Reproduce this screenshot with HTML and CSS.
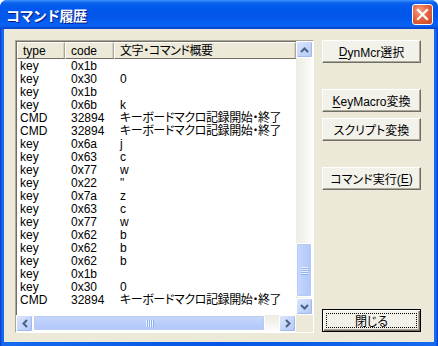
FILE: index.html
```html
<!DOCTYPE html>
<html lang="ja">
<head>
    <meta charset="UTF-8">
    <title>コマンド履歴</title>
    <link rel="stylesheet" href="styles.css">
</head>
<body>
    <div class="window">
        <div class="titlebar">
            <span class="title">コマンド履歴</span>
            <span class="close-btn">
                <svg width="13" height="13" viewBox="0 0 13 13">
                    <path d="M2 2 L11 11 M11 2 L2 11" stroke="#fff" stroke-width="2.2" stroke-linecap="square"/>
                </svg>
            </span>
        </div>
        <div class="client">
            <div class="list">
                <div class="view">
                    <div class="header">
                        <div class="col col-type">type</div>
                        <div class="col col-code">code</div>
                        <div class="col col-desc">文字・コマンド概要</div>
                    </div>
                    <div class="rows">
                        <div class="row"><span class="c-type">key</span><span class="c-code">0x1b</span><span class="c-desc"></span></div>
                        <div class="row"><span class="c-type">key</span><span class="c-code">0x30</span><span class="c-desc">0</span></div>
                        <div class="row"><span class="c-type">key</span><span class="c-code">0x1b</span><span class="c-desc"></span></div>
                        <div class="row"><span class="c-type">key</span><span class="c-code">0x6b</span><span class="c-desc">k</span></div>
                        <div class="row"><span class="c-type">CMD</span><span class="c-code">32894</span><span class="c-desc">キーボードマクロ記録開始・終了</span></div>
                        <div class="row"><span class="c-type">CMD</span><span class="c-code">32894</span><span class="c-desc">キーボードマクロ記録開始・終了</span></div>
                        <div class="row"><span class="c-type">key</span><span class="c-code">0x6a</span><span class="c-desc">j</span></div>
                        <div class="row"><span class="c-type">key</span><span class="c-code">0x63</span><span class="c-desc">c</span></div>
                        <div class="row"><span class="c-type">key</span><span class="c-code">0x77</span><span class="c-desc">w</span></div>
                        <div class="row"><span class="c-type">key</span><span class="c-code">0x22</span><span class="c-desc">"</span></div>
                        <div class="row"><span class="c-type">key</span><span class="c-code">0x7a</span><span class="c-desc">z</span></div>
                        <div class="row"><span class="c-type">key</span><span class="c-code">0x63</span><span class="c-desc">c</span></div>
                        <div class="row"><span class="c-type">key</span><span class="c-code">0x77</span><span class="c-desc">w</span></div>
                        <div class="row"><span class="c-type">key</span><span class="c-code">0x62</span><span class="c-desc">b</span></div>
                        <div class="row"><span class="c-type">key</span><span class="c-code">0x62</span><span class="c-desc">b</span></div>
                        <div class="row"><span class="c-type">key</span><span class="c-code">0x62</span><span class="c-desc">b</span></div>
                        <div class="row"><span class="c-type">key</span><span class="c-code">0x1b</span><span class="c-desc"></span></div>
                        <div class="row"><span class="c-type">key</span><span class="c-code">0x30</span><span class="c-desc">0</span></div>
                        <div class="row"><span class="c-type">CMD</span><span class="c-code">32894</span><span class="c-desc">キーボードマクロ記録開始・終了</span></div>
                    </div>
                </div>
                <div class="vscroll">
                    <div class="sb-btn">
                        <svg width="9" height="6" viewBox="0 0 9 6"><path d="M1 5 L4.5 1.5 L8 5" fill="none" stroke="#4D6185" stroke-width="2"/></svg>
                    </div>
                    <div class="v-track">
                        <div class="v-thumb">
                            <div class="grip-v"><i></i><i></i><i></i><i></i></div>
                        </div>
                    </div>
                    <div class="sb-btn">
                        <svg width="9" height="6" viewBox="0 0 9 6"><path d="M1 1 L4.5 4.5 L8 1" fill="none" stroke="#4D6185" stroke-width="2"/></svg>
                    </div>
                </div>
                <div class="hscroll">
                    <div class="sb-btn">
                        <svg width="6" height="9" viewBox="0 0 6 9"><path d="M5 1 L1.5 4.5 L5 8" fill="none" stroke="#4D6185" stroke-width="2"/></svg>
                    </div>
                    <div class="h-track">
                        <div class="h-thumb">
                            <div class="grip-h"><i></i><i></i><i></i><i></i></div>
                        </div>
                    </div>
                    <div class="sb-btn">
                        <svg width="6" height="9" viewBox="0 0 6 9"><path d="M1 1 L4.5 4.5 L1 8" fill="none" stroke="#4D6185" stroke-width="2"/></svg>
                    </div>
                </div>
                <div class="corner"></div>
            </div>

            <div class="buttons">
                <div class="btn btn-first"><u>D</u>ynMcr選択</div>
                <div class="btn btn-gap"><u>K</u>eyMacro変換</div>
                <div class="btn btn-near">スクリプト変換</div>
                <div class="btn btn-gap">コマンド実行(<u>E</u>)</div>
                <div class="btn btn-default"><span class="focus">閉じる</span></div>
            </div>
        </div>
    </div>
</body>
</html>
```

FILE: styles.css
```css
* {
    margin: 0;
    padding: 0;
    box-sizing: border-box;
}

body {
    background: #ffffff;
    font-family: 'Liberation Sans', 'Noto Sans CJK JP', sans-serif;
    font-size: 12px;
    color: #000;
}

.window {
    width: 438px;
    height: 346px;
    display: flex;
    flex-direction: column;
    background: linear-gradient(to right, #0831D9 0, #166AEE 2px, #0855E5 50%, #166AEE calc(100% - 2px), #0831D9 100%);
    border-radius: 7px 7px 0 0;
    overflow: hidden;
}

.titlebar {
    height: 29px;
    display: flex;
    align-items: center;
    justify-content: space-between;
    padding: 0 5px 0 6px;
    background: linear-gradient(to bottom, #3D95FF 0, #0A5FEC 3px, #0058EE 8px, #0357E9 18px, #0662F5 24px, #0C5FEE 26px, #0447D4 28px);
}

.title {
    color: #fff;
    font-family: 'Noto Sans CJK JP', sans-serif;
    font-weight: bold;
    font-size: 14px;
    text-shadow: 1px 1px 0 #0A1883;
    letter-spacing: -0.6px;
}

.close-btn {
    width: 21px;
    height: 21px;
    display: flex;
    align-items: center;
    justify-content: center;
    border: 1px solid #fff;
    border-radius: 3px;
    background: radial-gradient(circle at 35% 30%, #F4A283 0, #E66A44 40%, #CC4320 100%);
}

.client {
    flex: 1;
    margin: 0 4px 4px;
    background: #ECE9D8;
    display: flex;
    padding: 11px 0 0 11px;
}

/* list view */
.list {
    width: 299px;
    height: 293px;
    display: grid;
    grid-template-columns: 1fr 17px;
    grid-template-rows: 1fr 17px;
    border: 1px solid;
    border-color: #ACA899 #fff #fff #ACA899;
    background: #fff;
    box-shadow: inset 1px 1px 0 #716F64;
}

.view {
    overflow: hidden;
    padding: 1px 0 0 1px;
}

.header {
    display: flex;
    height: 17px;
    background: #ECE9D8;
    white-space: nowrap;
}

.col {
    height: 17px;
    line-height: 16px;
    padding-left: 5px;
    border-top: 1px solid #fff;
    border-left: 1px solid #fff;
    border-right: 1px solid #ACA899;
    border-bottom: 1px solid #716F64;
    box-shadow: inset -1px 0 0 #D6D2C2;
}

.col-type { width: 48px; }
.col-code { width: 49px; }
.col-desc { flex: 1; font-feature-settings: "palt"; letter-spacing: -0.4px; }

.rows {
    padding-top: 1px;
}

.row {
    display: flex;
    height: 13px;
    line-height: 13px;
    white-space: nowrap;
}

.c-type { width: 48px; padding-left: 3px; }
.c-code { width: 49px; padding-left: 6px; }
.c-desc { padding-left: 6px; font-feature-settings: "palt"; letter-spacing: -0.4px; }

/* scrollbars */
.vscroll {
    display: flex;
    flex-direction: column;
    background: linear-gradient(to right, #EEEDE5, #F3F1EC 40%, #FEFEFE);
}

.hscroll {
    display: flex;
    background: linear-gradient(to bottom, #EEEDE5, #F3F1EC 40%, #FEFEFE);
}

.corner {
    background: #ECE9D8;
}

.sb-btn {
    width: 17px;
    height: 17px;
    flex: none;
    display: flex;
    align-items: center;
    justify-content: center;
    border: 1px solid #fff;
    border-radius: 2px;
    background: linear-gradient(135deg, #DCE6FC, #C1D3FB 60%, #B4C8F6);
    box-shadow: inset -1px -1px 0 #A3B9EC;
}

.v-track {
    flex: 1;
    display: flex;
    flex-direction: column;
    justify-content: flex-end;
    padding-bottom: 1px;
}

.v-thumb {
    height: 54px;
    margin: 0 1px 0 0;
    border: 1px solid #fff;
    border-radius: 2px;
    background: linear-gradient(to right, #C9D8FC, #BBCEFB 50%, #B1C7F9);
    box-shadow: inset 0 0 0 1px #B7CAF4;
    display: flex;
    align-items: center;
    justify-content: center;
}

.h-track {
    flex: 1;
    display: flex;
    padding-right: 14px;
}

.h-thumb {
    flex: 1;
    margin: 0 0 1px 0;
    border: 1px solid #fff;
    border-radius: 2px;
    background: linear-gradient(to bottom, #C9D8FC, #BBCEFB 50%, #B1C7F9);
    box-shadow: inset 0 0 0 1px #B7CAF4;
    display: flex;
    align-items: center;
    justify-content: center;
}

.grip-v {
    display: flex;
    flex-direction: column;
    gap: 1px;
}

.grip-v i {
    display: block;
    width: 7px;
    height: 1px;
    background: #EEF4FE;
    box-shadow: 0 1px 0 #8CB0F8;
}

.grip-h {
    display: flex;
    gap: 1px;
}

.grip-h i {
    display: block;
    width: 1px;
    height: 7px;
    background: #EEF4FE;
    box-shadow: 1px 0 0 #8CB0F8;
}

/* buttons */
.buttons {
    margin-left: 8px;
    display: flex;
    flex-direction: column;
    width: 99px;
}

.btn {
    height: 23px;
    display: flex;
    align-items: center;
    justify-content: center;
    font-family: 'Liberation Sans', 'Noto Sans CJK JP', sans-serif;
    font-feature-settings: "palt";
    background: #F2F1EA;
    border: 1px solid;
    border-color: #fff #716F64 #716F64 #fff;
    box-shadow: inset -1px -1px 0 #ACA899;
}

.btn u {
    text-decoration: underline;
    text-underline-offset: 2px;
}

.btn-gap { margin-top: 26px; }
.btn-near { margin-top: 6px; }

.btn-default {
    margin-top: auto;
    margin-bottom: 10px;
    border: 1px solid #000;
    box-shadow: inset 1px 1px 0 #fff, inset -1px -1px 0 #716F64, inset -2px -2px 0 #ACA899;
    padding: 3px;
}

.focus {
    flex: 1;
    align-self: stretch;
    display: flex;
    align-items: center;
    justify-content: center;
    border: 1px dotted #000;
}
```
